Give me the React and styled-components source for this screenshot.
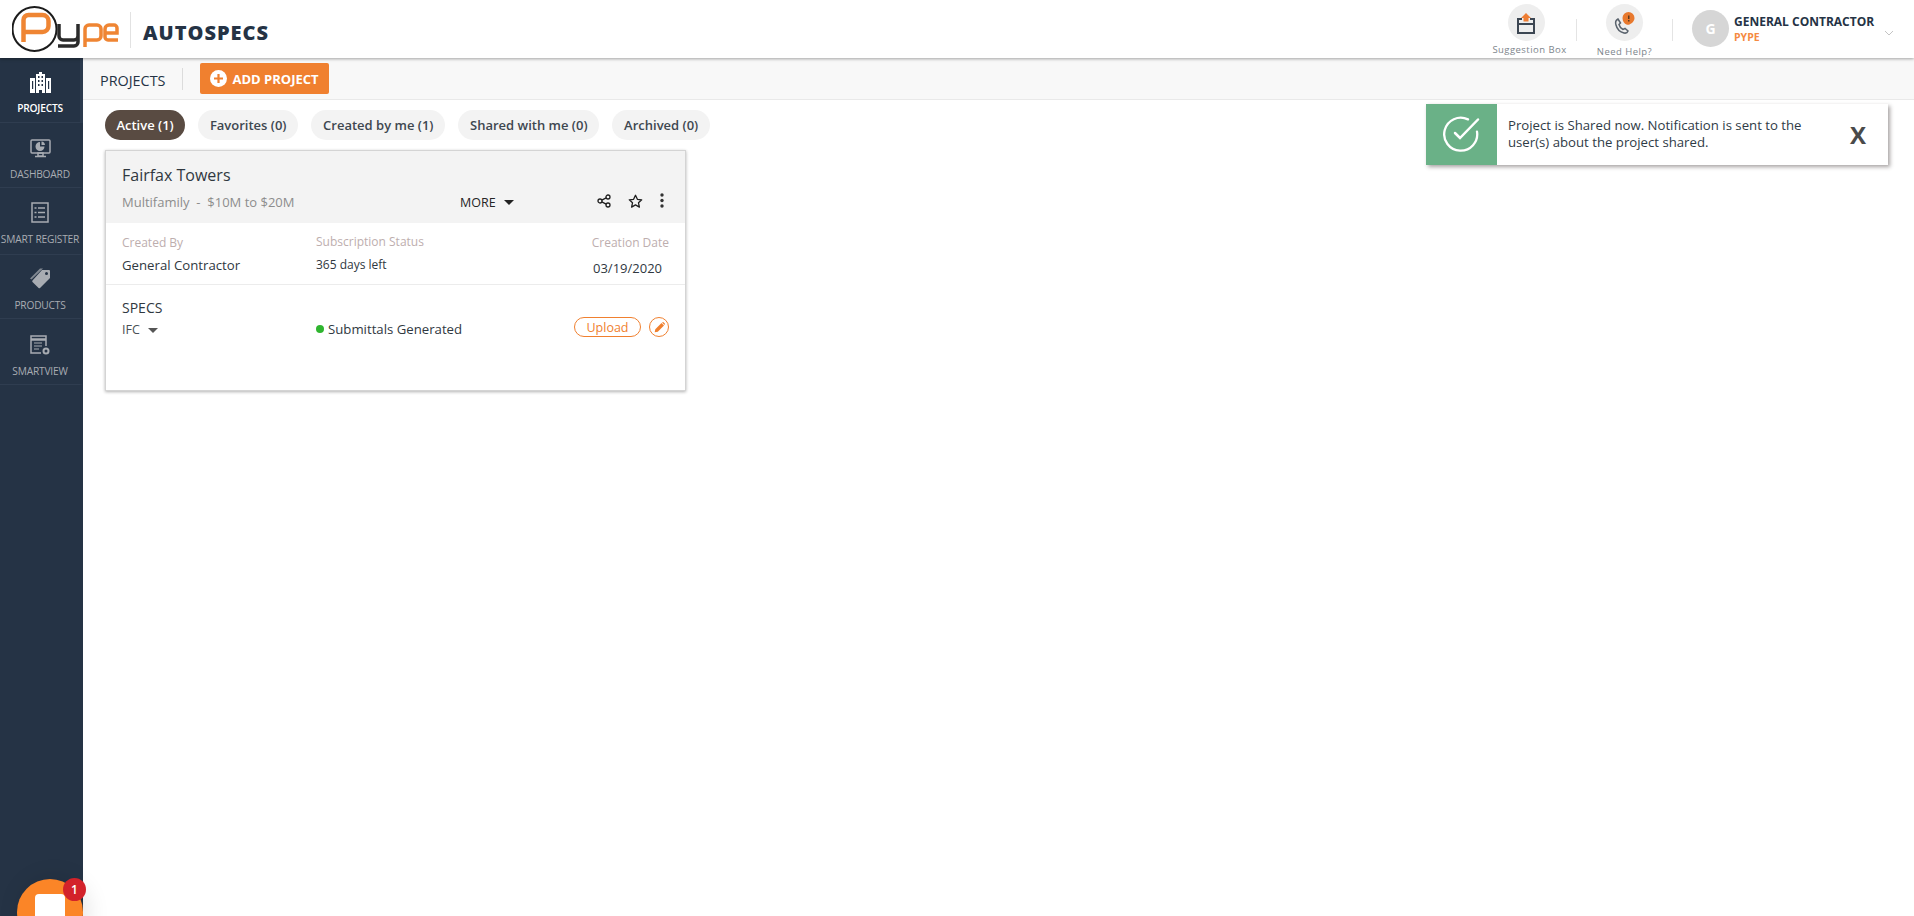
import React from 'react';
import styled, { createGlobalStyle } from 'styled-components';

const GlobalStyle = createGlobalStyle`
  html, body {
    margin: 0;
    padding: 0;
    height: 100%;
    background: #fff;
    font-family: "Open Sans", "Liberation Sans", sans-serif;
    overflow: hidden;
  }
  * { box-sizing: border-box; }
`;

const Page = styled.div`
  position: relative;
  width: 1914px;
  height: 916px;
  overflow: hidden;
  display: flex;
  flex-direction: column;
`;

const Header = styled.header`
  height: 58px;
  flex: none;
  display: flex;
  align-items: center;
  justify-content: space-between;
  padding-left: 12px;
  background: #fff;
  box-shadow: 0 1px 3px rgba(0, 0, 0, 0.35);
  position: relative;
  z-index: 3;
`;

const Brand = styled.div`
  display: flex;
  align-items: center;
`;

const BrandDivider = styled.div`
  width: 1px;
  height: 36px;
  margin: 2px 12px 0 11px;
  background: #e2e2e2;
`;

const ProductName = styled.div`
  font-size: 20px;
  font-weight: 800;
  letter-spacing: 1px;
  color: #253345;
  margin-top: 7px;
`;

const HeaderRight = styled.div`
  display: flex;
  align-items: flex-start;
  height: 58px;
`;

const HeaderTool = styled.div`
  width: ${(p) => p.$width}px;
  padding-top: ${(p) => p.$top}px;
  display: flex;
  flex-direction: column;
  align-items: center;
`;

const ToolCircle = styled.div`
  width: 37px;
  height: 37px;
  border-radius: 50%;
  background: #eeeeee;
  display: flex;
  align-items: center;
  justify-content: center;
`;

const ToolLabel = styled.div`
  font-size: 9.5px;
  line-height: 13px;
  margin-top: ${(p) => p.$gap}px;
  margin-left: ${(p) => p.$shift || 0}px;
  letter-spacing: 0.45px;
  color: #7d858c;
  white-space: nowrap;
`;

const HeaderDivider = styled.div`
  width: 1px;
  height: 22px;
  margin: 19px ${(p) => p.$right}px 0 ${(p) => p.$left}px;
  background: #e4e4e4;
`;

const Avatar = styled.div`
  width: 37px;
  height: 37px;
  margin-top: 10px;
  border-radius: 50%;
  background: #d6d6d6;
  color: #fff;
  font-size: 14px;
  font-weight: 700;
  display: flex;
  align-items: center;
  justify-content: center;
`;

const UserBlock = styled.div`
  margin: 14px 0 0 5px;
  width: 146px;
`;

const UserName = styled.div`
  font-size: 12px;
  line-height: 16px;
  font-weight: 700;
  color: #253345;
  white-space: nowrap;
`;

const UserCompany = styled.div`
  font-size: 10.5px;
  line-height: 14px;
  font-weight: 700;
  color: #f58a42;
`;

const UserCaret = styled.div`
  width: 34px;
  margin-top: 19px;
  padding-left: 4px;
  color: #c4c4c4;
`;

const Body = styled.div`
  flex: 1;
  display: flex;
  min-height: 0;
`;

const Sidebar = styled.nav`
  width: 83px;
  flex: none;
  background: #253345;
`;

const NavItem = styled.a`
  display: flex;
  flex-direction: column;
  align-items: center;
  height: ${(p) => p.$height}px;
  padding-top: ${(p) => p.$top}px;
  border-bottom: 1px solid #2f3d50;
  border-right: 3px solid ${(p) => (p.$active ? '#2c3b4e' : 'transparent')};
  color: ${(p) => (p.$active ? '#ffffff' : '#a8acb2')};
`;

const NavIcon = styled.div`
  width: 24px;
  height: 24px;
  display: flex;
  align-items: center;
  justify-content: center;
`;

const NavLabel = styled.div`
  margin-top: ${(p) => p.$gap}px;
  font-size: 10.2px;
  line-height: 14px;
  letter-spacing: -0.2px;
  white-space: nowrap;
  color: inherit;
  font-weight: ${(p) => (p.$active ? 600 : 400)};
`;

const Main = styled.main`
  flex: 1;
  min-width: 0;
`;

const Toolbar = styled.div`
  height: 42px;
  display: flex;
  align-items: center;
  padding: 0 0 0 17px;
  background: #f8f8f8;
  border-bottom: 1px solid #e9e9e9;
`;

const ToolbarTitle = styled.div`
  font-size: 14.4px;
  margin-top: 3px;
  color: #253345;
`;

const ToolbarDivider = styled.div`
  width: 1px;
  height: 22px;
  margin: 0 17px 0 17px;
  background: #dcdcdc;
`;

const AddButton = styled.button`
  width: 129px;
  height: 31px;
  padding: 0 0 0 10px;
  border: 0;
  border-radius: 2px;
  background: #f0802f;
  color: #fff;
  font-family: inherit;
  font-size: 13px;
  font-weight: 700;
  display: flex;
  align-items: center;
  gap: 5px;
  white-space: nowrap;
`;

const Content = styled.div`
  padding: 10px 0 0 22px;
`;

const Tabs = styled.div`
  display: flex;
  gap: 13px;
`;

const Tab = styled.div`
  height: 30px;
  padding: 0 ${(p) => (p.$active ? 11.4 : 11.8)}px;
  border-radius: 15px;
  background: ${(p) => (p.$active ? '#594b42' : '#f3f3f3')};
  color: ${(p) => (p.$active ? '#ffffff' : '#3e4750')};
  font-size: 13px;
  font-weight: 600;
  display: flex;
  align-items: center;
  white-space: nowrap;
`;

const Card = styled.section`
  width: 581px;
  height: 241px;
  margin-top: 10px;
  border: 1px solid #d4d4d4;
  background: #fff;
  box-shadow: 0 1px 3px rgba(0, 0, 0, 0.3);
`;

const CardHead = styled.div`
  height: 72px;
  padding: 12px 16px 0;
  background: #f3f3f3;
`;

const CardTitle = styled.div`
  font-size: 16px;
  line-height: 24px;
  color: #30383f;
`;

const CardSub = styled.div`
  margin-top: 4px;
  display: flex;
  align-items: center;
  height: 22px;
`;

const CardMeta = styled.div`
  width: 338px;
  font-size: 13px;
  color: #8d8d8d;
  white-space: nowrap;
`;

const MoreLink = styled.div`
  width: 137px;
  font-size: 12.5px;
  color: #252525;
  display: flex;
  align-items: center;
  gap: 8px;
`;

const CaretDown = styled.span`
  width: 0;
  height: 0;
  border-left: ${(p) => p.$size}px solid transparent;
  border-right: ${(p) => p.$size}px solid transparent;
  border-top: ${(p) => p.$size}px solid ${(p) => p.$color};
`;

const CardActions = styled.div`
  display: flex;
  align-items: center;
  gap: 17px;
  margin-top: -2px;
`;

const InfoRow = styled.div`
  height: 62px;
  padding: 10px 16px 0;
  display: grid;
  grid-template-columns: 194px 1fr auto;
  border-bottom: 1px solid #ececec;
`;

const InfoCell = styled.div`
  text-align: ${(p) => (p.$right ? 'right' : 'left')};
`;

const InfoLabel = styled.div`
  font-size: 12px;
  line-height: 17px;
  color: #bdaeae;
  margin-top: ${(p) => p.$top || 0}px;
`;

const InfoValue = styled.div`
  font-size: ${(p) => p.$size}px;
  line-height: 18px;
  margin-top: ${(p) => p.$top}px;
  padding-right: ${(p) => p.$inset || 0}px;
  color: #30383f;
`;

const SpecsRow = styled.div`
  padding: 14px 16px 0;
  display: grid;
  grid-template-columns: 194px 1fr auto;
`;

const SpecsTitle = styled.div`
  font-size: 14px;
  line-height: 18px;
  color: #30383f;
`;

const SpecsVersion = styled.div`
  margin-top: 4px;
  font-size: 12.5px;
  line-height: 18px;
  color: #4a5056;
  display: flex;
  align-items: center;
  gap: 8px;
`;

const StatusText = styled.div`
  margin-top: 20px;
  font-size: 13.2px;
  line-height: 18px;
  color: #30383f;
  display: flex;
  align-items: center;
  gap: 4px;
`;

const StatusDot = styled.span`
  width: 8px;
  height: 8px;
  border-radius: 50%;
  background: #2fb52f;
`;

const SpecActions = styled.div`
  margin-top: 18px;
  display: flex;
  align-items: center;
  gap: 8px;
  height: 20px;
`;

const UploadButton = styled.div`
  width: 67px;
  height: 20px;
  border: 1px solid #f0802f;
  border-radius: 10px;
  color: #f0802f;
  font-size: 12.5px;
  display: flex;
  align-items: center;
  justify-content: center;
`;

const EditButton = styled.div`
  width: 20px;
  height: 20px;
  border: 1px solid #f0802f;
  border-radius: 50%;
  display: flex;
  align-items: center;
  justify-content: center;
`;

const Toast = styled.div`
  position: absolute;
  left: 1426px;
  top: 104px;
  width: 462px;
  height: 61px;
  display: flex;
  align-items: center;
  background: #fff;
  box-shadow: 2px 2px 4px rgba(60, 50, 50, 0.45);
  z-index: 4;
`;

const ToastBadge = styled.div`
  width: 71px;
  height: 100%;
  flex: none;
  background: #6ab187;
  display: flex;
  align-items: center;
  justify-content: center;
`;

const ToastText = styled.div`
  width: 330px;
  margin: -2px 0 0 11px;
  font-size: 13.2px;
  line-height: 17px;
  color: #2f3b46;
`;

const ToastClose = styled.div`
  margin-left: 12px;
  font-size: 24px;
  font-weight: 700;
  color: #4a4a4a;
`;

const ChatBubble = styled.div`
  position: absolute;
  left: 17px;
  top: 879px;
  width: 66px;
  height: 66px;
  border-radius: 50%;
  background: #fb8527;
  box-shadow: 4px 0 24px rgba(0, 0, 0, 0.12);
  z-index: 5;
  display: flex;
  justify-content: center;
  padding-top: 15px;
`;

const ChatSquare = styled.div`
  width: 30px;
  height: 30px;
  border-radius: 4px;
  background: #fff;
`;

const ChatCount = styled.div`
  position: absolute;
  left: 46px;
  top: -1px;
  width: 23px;
  height: 23px;
  border-radius: 50%;
  background: #d3222a;
  color: #fff;
  font-size: 12px;
  font-weight: 600;
  display: flex;
  align-items: center;
  justify-content: center;
`;

function PypeLogo() {
  return (
    <svg width="107" height="50" viewBox="0 0 107 50">
      <circle cx="22.5" cy="25" r="22" fill="#fff" stroke="#1c1c1c" strokeWidth="2" />
      <path
        d="M11.500 38V16a5 5 0 0 1 5-5h14a6 6 0 0 1 6 6v5a6 6 0 0 1-6 6H11.500"
        fill="none"
        stroke="#ef8533"
        strokeWidth="4.500"
      />
      <path
        d="M47 20v12a4 4 0 0 0 4 4h11a4 4 0 0 0 4-4V20M66 32v6a4 4 0 0 1-4 4H46"
        fill="none"
        stroke="#2b2b2b"
        strokeWidth="3.500"
      />
      <path
        d="M73 43V25a4 4 0 0 1 4-4h8a4 4 0 0 1 4 4v7a4 4 0 0 1-4 4H73M106 36H96a3 3 0 0 1-3-3v-8a4 4 0 0 1 4-4h5a3 3 0 0 1 3 3v5H93"
        fill="none"
        stroke="#ef8533"
        strokeWidth="3.500"
      />
    </svg>
  );
}

function SuggestionIcon() {
  return (
    <svg width="22" height="24" viewBox="0 0 22 24">
      <path d="M7 8H3v14h16V8h-4" fill="none" stroke="#3c4652" strokeWidth="2" />
      <path d="M3 13h16" stroke="#3c4652" strokeWidth="2" />
      <path d="M11 2l5 5h-2.500v3.500h-5V7H6z" fill="#ee7d33" />
    </svg>
  );
}

function HelpIcon() {
  return (
    <svg width="24" height="24" viewBox="0 0 24 24">
      <path
        d="M5 8c-2 1-3 3-2 6 1 4 4 7 8 8 2 .4 3.500-.5 4-2l-3-2.500-2 1c-2-1-3.500-3-4-5l1.500-1.500z"
        fill="none"
        stroke="#5a636d"
        strokeWidth="1.500"
      />
      <path d="M15.500 1a6 6 0 0 1 6 6c0 3.500-3 5.500-5 6.500-1 .4-2 .4-3 0-2-.8-4-3-4-6.500a6 6 0 0 1 6-6z" fill="#e8792e" />
      <rect x="15" y="4.500" width="1.500" height="3.500" fill="#5d3a20" />
      <rect x="15" y="9" width="1.500" height="1.500" fill="#5d3a20" />
    </svg>
  );
}

function BuildingIcon() {
  return (
    <svg width="21" height="21" viewBox="0 0 21 21" fill="currentColor">
      <path d="M9 0h3v2h3v19h-3v-3H9v3H6V2h3z" />
      <path d="M0 6h5v15H0zM16 6h5v15h-5z" />
      <g fill="#253345">
        <rect x="8" y="4" width="1.500" height="2" />
        <rect x="11.500" y="4" width="1.500" height="2" />
        <rect x="8" y="8" width="1.500" height="2" />
        <rect x="11.500" y="8" width="1.500" height="2" />
        <rect x="8" y="12" width="1.500" height="2" />
        <rect x="11.500" y="12" width="1.500" height="2" />
        <rect x="2" y="9" width="1.200" height="8" />
        <rect x="18" y="9" width="1.200" height="8" />
      </g>
    </svg>
  );
}

function DashboardIcon() {
  return (
    <svg width="21" height="20" viewBox="0 0 21 20" fill="none">
      <rect x="1" y="1" width="19" height="13" rx="1" stroke="currentColor" strokeWidth="1.500" />
      <path d="M10 3v4.500h4.500A4.500 4.500 0 1 1 10 3z" fill="currentColor" />
      <path d="M11.500 2.500a4 4 0 0 1 3.500 3.500h-3.500z" fill="currentColor" />
      <path d="M8 14h5v3H8zM5 17.500h11" stroke="currentColor" strokeWidth="1.500" />
    </svg>
  );
}

function RegisterIcon() {
  return (
    <svg width="18" height="21" viewBox="0 0 18 21" fill="none" stroke="currentColor">
      <rect x="1" y="1" width="16" height="19" strokeWidth="1.500" />
      <path d="M7 6h7M7 10.500h7M7 15h7" strokeWidth="1.500" />
      <path d="M3.500 6h2M3.500 10.500h2M3.500 15h2" strokeWidth="1.500" />
    </svg>
  );
}

function TagIcon() {
  return (
    <svg width="21" height="21" viewBox="0 0 21 21" fill="currentColor">
      <path d="M12 2h7a1 1 0 0 1 1 1v7l-10 10a1 1 0 0 1-1.400 0L2.500 14a1 1 0 0 1 0-1.400zM16.500 4a1.500 1.500 0 1 0 0 3 1.500 1.500 0 0 0 0-3z" fillRule="evenodd" />
      <path d="M10 .5h3L1.500 11.500 0 10.500z" opacity="0.7" />
    </svg>
  );
}

function SmartViewIcon() {
  return (
    <svg width="21" height="21" viewBox="0 0 21 21" fill="none" stroke="currentColor">
      <path d="M11 18H1V1h15v10" strokeWidth="1.500" />
      <path d="M1 4.500h15" strokeWidth="2.500" />
      <path d="M4 8h8M4 11h8M4 14h5" strokeWidth="1.200" />
      <circle cx="16" cy="16" r="2.500" strokeWidth="2" />
    </svg>
  );
}

function ShareIcon() {
  return (
    <svg width="14" height="14" viewBox="0 0 14 14" fill="none" stroke="#1e1e1e" strokeWidth="1.300">
      <circle cx="3" cy="7" r="2" />
      <circle cx="11" cy="3" r="2" />
      <circle cx="11" cy="11" r="2" />
      <path d="M4.800 6.100l4.400-2.200M4.800 7.900l4.400 2.200" />
    </svg>
  );
}

function StarIcon() {
  return (
    <svg width="15" height="15" viewBox="0 0 15 15">
      <path
        d="M7.500 1.300l1.900 4 4.300.5-3.200 3 .9 4.300-3.900-2.200-3.900 2.200.9-4.300-3.200-3 4.300-.5z"
        fill="none"
        stroke="#1e1e1e"
        strokeWidth="1.300"
        strokeLinejoin="round"
      />
    </svg>
  );
}

function DotsIcon() {
  return (
    <svg width="4" height="16" viewBox="0 0 4 16" fill="#333">
      <circle cx="2" cy="2" r="1.700" />
      <circle cx="2" cy="7.500" r="1.700" />
      <circle cx="2" cy="13" r="1.700" />
    </svg>
  );
}

function PencilIcon() {
  return (
    <svg width="11" height="11" viewBox="0 0 11 11" fill="#f0802f">
      <path d="M7.500 1l2.500 2.500-6.200 6.200-3.100.6.600-3.100zM8 .5l.7-.3a1 1 0 0 1 1.100.2l.8.8a1 1 0 0 1 .2 1.100l-.3.700z" />
    </svg>
  );
}

function PlusCircleIcon() {
  return (
    <svg width="17" height="17" viewBox="0 0 17 17">
      <circle cx="8.500" cy="8.500" r="8.500" fill="#fff" />
      <path d="M8.500 4v9M4 8.500h9" stroke="#f0802f" strokeWidth="2.200" />
    </svg>
  );
}

function CheckBadgeIcon() {
  return (
    <svg width="37" height="37" viewBox="0 0 37 37" fill="none" stroke="#fff" strokeWidth="2.300" strokeLinecap="round">
      <path d="M25 3.400A16.500 16.500 0 1 0 34 15.600" />
      <path d="M12 17l5 5L35 3.500" strokeWidth="2.500" />
    </svg>
  );
}

function ChevronIcon() {
  return (
    <svg width="10" height="6" viewBox="0 0 10 6" fill="none" stroke="currentColor">
      <path d="M1 1l4 4 4-4" />
    </svg>
  );
}

const navItems = [
  { label: 'PROJECTS', icon: <BuildingIcon />, height: 65, top: 12, gap: 7, active: true },
  { label: 'DASHBOARD', icon: <DashboardIcon />, height: 65, top: 14, gap: 6 },
  { label: 'SMART REGISTER', icon: <RegisterIcon />, height: 67, top: 12, gap: 8 },
  { label: 'PRODUCTS', icon: <TagIcon />, height: 64, top: 11, gap: 8 },
  { label: 'SMARTVIEW', icon: <SmartViewIcon />, height: 66, top: 14, gap: 7 },
];

const tabs = [
  { label: 'Active (1)', active: true },
  { label: 'Favorites (0)' },
  { label: 'Created by me (1)' },
  { label: 'Shared with me (0)' },
  { label: 'Archived (0)' },
];

export default function App() {
  return (
    <Page>
      <GlobalStyle />
      <Header>
        <Brand>
          <PypeLogo />
          <BrandDivider />
          <ProductName>AUTOSPECS</ProductName>
        </Brand>
        <HeaderRight>
          <HeaderTool $width={90} $top={4}>
            <ToolCircle>
              <SuggestionIcon />
            </ToolCircle>
            <ToolLabel $gap={2} $shift={7}>Suggestion Box</ToolLabel>
          </HeaderTool>
          <HeaderDivider $left={5} $right={6} />
          <HeaderTool $width={83} $top={4}>
            <ToolCircle>
              <HelpIcon />
            </ToolCircle>
            <ToolLabel $gap={4}>Need Help?</ToolLabel>
          </HeaderTool>
          <HeaderDivider $left={6} $right={19} />
          <Avatar>G</Avatar>
          <UserBlock>
            <UserName>GENERAL CONTRACTOR</UserName>
            <UserCompany>PYPE</UserCompany>
          </UserBlock>
          <UserCaret>
            <ChevronIcon />
          </UserCaret>
        </HeaderRight>
      </Header>
      <Body>
        <Sidebar>
          {navItems.map((item) => (
            <NavItem key={item.label} $active={item.active} $height={item.height} $top={item.top}>
              <NavIcon>{item.icon}</NavIcon>
              <NavLabel $active={item.active} $gap={item.gap}>{item.label}</NavLabel>
            </NavItem>
          ))}
        </Sidebar>
        <Main>
          <Toolbar>
            <ToolbarTitle>PROJECTS</ToolbarTitle>
            <ToolbarDivider />
            <AddButton>
              <PlusCircleIcon />
              ADD PROJECT
            </AddButton>
          </Toolbar>
          <Content>
            <Tabs>
              {tabs.map((tab) => (
                <Tab key={tab.label} $active={tab.active}>
                  {tab.label}
                </Tab>
              ))}
            </Tabs>
            <Card>
              <CardHead>
                <CardTitle>Fairfax Towers</CardTitle>
                <CardSub>
                  <CardMeta>Multifamily&nbsp; -&nbsp; $10M to $20M</CardMeta>
                  <MoreLink>
                    MORE
                    <CaretDown $size={5} $color="#222" />
                  </MoreLink>
                  <CardActions>
                    <ShareIcon />
                    <StarIcon />
                    <DotsIcon />
                  </CardActions>
                </CardSub>
              </CardHead>
              <InfoRow>
                <InfoCell>
                  <InfoLabel $top={1}>Created By</InfoLabel>
                  <InfoValue $size={13.2} $top={5}>General Contractor</InfoValue>
                </InfoCell>
                <InfoCell>
                  <InfoLabel>Subscription Status</InfoLabel>
                  <InfoValue $size={12} $top={6}>365 days left</InfoValue>
                </InfoCell>
                <InfoCell $right>
                  <InfoLabel $top={1}>Creation Date</InfoLabel>
                  <InfoValue $size={13} $top={8} $inset={7}>03/19/2020</InfoValue>
                </InfoCell>
              </InfoRow>
              <SpecsRow>
                <div>
                  <SpecsTitle>SPECS</SpecsTitle>
                  <SpecsVersion>
                    IFC
                    <CaretDown $size={5} $color="#555" />
                  </SpecsVersion>
                </div>
                <StatusText>
                  <StatusDot />
                  Submittals Generated
                </StatusText>
                <SpecActions>
                  <UploadButton>Upload</UploadButton>
                  <EditButton>
                    <PencilIcon />
                  </EditButton>
                </SpecActions>
              </SpecsRow>
            </Card>
          </Content>
        </Main>
      </Body>
      <Toast>
        <ToastBadge>
          <CheckBadgeIcon />
        </ToastBadge>
        <ToastText>Project is Shared now. Notification is sent to the user(s) about the project shared.</ToastText>
        <ToastClose>X</ToastClose>
      </Toast>
      <ChatBubble>
        <ChatSquare />
        <ChatCount>1</ChatCount>
      </ChatBubble>
    </Page>
  );
}
